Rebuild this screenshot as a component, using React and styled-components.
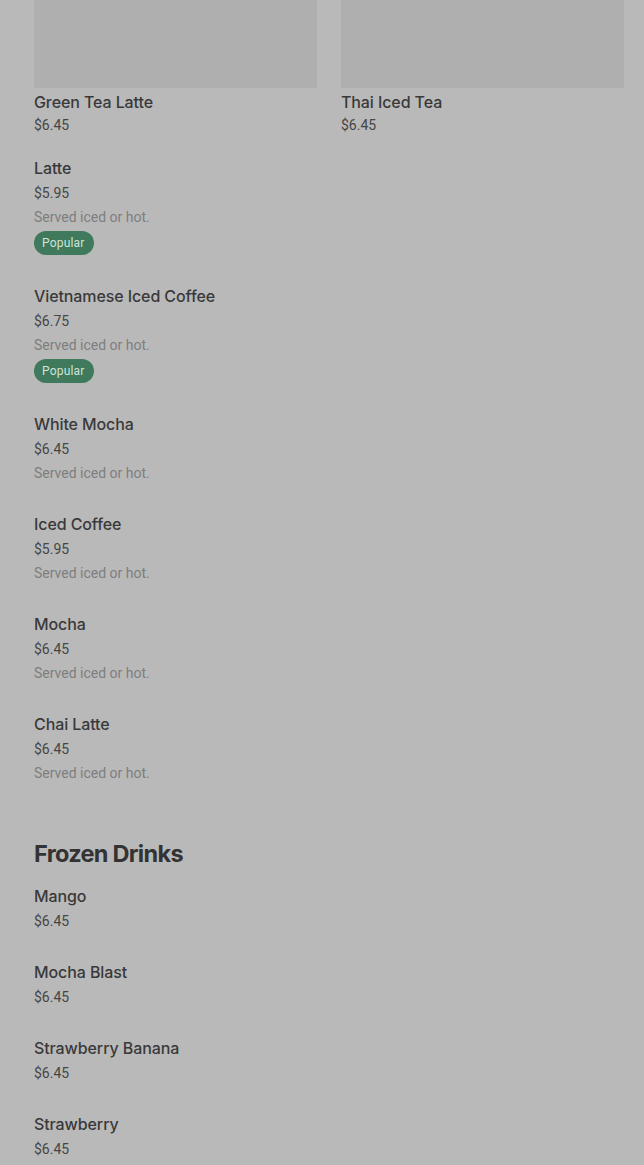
import React from 'react';
import styled, { createGlobalStyle } from 'styled-components';

const GlobalStyle = createGlobalStyle`
    html, body {
        margin: 0;
        padding: 0;
        background: #b9b9b9;
    }
    body {
        font-family: Inter, "Noto Sans", Roboto, sans-serif;
        -webkit-font-smoothing: antialiased;
    }
`;

const Page = styled.div`
    padding: 0 20px 40px 34px;
    background: #b9b9b9;
    min-height: 1165px;
    box-sizing: border-box;
`;

const FeaturedGrid = styled.div`
    display: grid;
    grid-template-columns: 283px 283px;
    column-gap: 24px;
    margin-bottom: 20px;
`;

const Card = styled.div`
    display: flex;
    flex-direction: column;
`;

const CardImage = styled.div`
    height: 88px;
    background: #afafaf;
    margin-bottom: 2px;
`;

const ItemTitle = styled.div`
    font-size: 16px;
    font-weight: 500;
    line-height: ${(p) => (p.$compact ? '24px' : '25px')};
    color: #393939;
    letter-spacing: -0.1px;
`;

const Price = styled.div`
    font-family: Roboto, "Noto Sans", sans-serif;
    font-size: 14px;
    line-height: ${(p) => (p.$compact ? '22px' : '24px')};
    color: #464646;
`;

const Desc = styled.div`
    font-family: Roboto, "Noto Sans", sans-serif;
    font-size: 14px;
    line-height: 24px;
    color: #7e7e7e;
`;

const Badge = styled.span`
    align-self: flex-start;
    margin: 2px 0;
    height: 24px;
    line-height: 24px;
    padding: 0 9px 0 8px;
    border-radius: 12px;
    background: #3e7a5b;
    color: #d2e2d7;
    font-family: Roboto, "Noto Sans", sans-serif;
    font-size: 12px;
    letter-spacing: 0.2px;
`;

const List = styled.div`
    display: flex;
    flex-direction: column;
    gap: 27px;
`;

const Item = styled.div`
    display: flex;
    flex-direction: column;
`;

const SectionTitle = styled.h2`
    margin: 53px 0 14px;
    font-size: 23.5px;
    font-weight: 700;
    line-height: 32px;
    letter-spacing: -0.7px;
    color: #333;
`;

const featured = [
    { name: 'Green Tea Latte', price: '$6.45' },
    { name: 'Thai Iced Tea', price: '$6.45' },
];

const drinks = [
    { name: 'Latte', price: '$5.95', desc: 'Served iced or hot.', popular: true },
    { name: 'Vietnamese Iced Coffee', price: '$6.75', desc: 'Served iced or hot.', popular: true },
    { name: 'White Mocha', price: '$6.45', desc: 'Served iced or hot.' },
    { name: 'Iced Coffee', price: '$5.95', desc: 'Served iced or hot.' },
    { name: 'Mocha', price: '$6.45', desc: 'Served iced or hot.' },
    { name: 'Chai Latte', price: '$6.45', desc: 'Served iced or hot.' },
];

const frozen = [
    { name: 'Mango', price: '$6.45' },
    { name: 'Mocha Blast', price: '$6.45' },
    { name: 'Strawberry Banana', price: '$6.45' },
    { name: 'Strawberry', price: '$6.45' },
];

const MenuItem = ({ item }) => (
    <Item>
        <ItemTitle>{item.name}</ItemTitle>
        <Price>{item.price}</Price>
        {item.desc && <Desc>{item.desc}</Desc>}
        {item.popular && <Badge>Popular</Badge>}
    </Item>
);

export default function App() {
    return (
        <>
            <GlobalStyle />
            <Page>
                <FeaturedGrid>
                    {featured.map((f) => (
                        <Card key={f.name}>
                            <CardImage />
                            <ItemTitle $compact>{f.name}</ItemTitle>
                            <Price $compact>{f.price}</Price>
                        </Card>
                    ))}
                </FeaturedGrid>
                <List>
                    {drinks.map((d) => <MenuItem key={d.name} item={d} />)}
                </List>
                <SectionTitle>Frozen Drinks</SectionTitle>
                <List>
                    {frozen.map((d) => <MenuItem key={d.name} item={d} />)}
                </List>
            </Page>
        </>
    );
}
